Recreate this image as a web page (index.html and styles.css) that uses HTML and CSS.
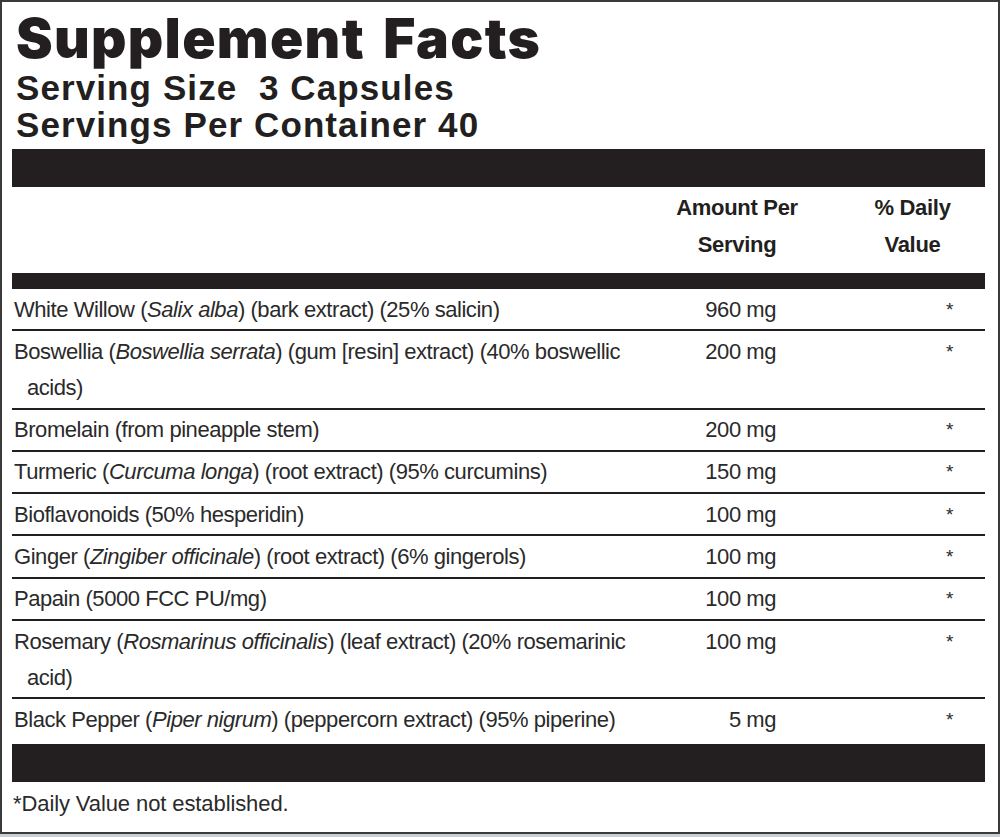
FILE: index.html
```html
<!DOCTYPE html>
<html lang="en">
<head>
<meta charset="utf-8">
<title>Supplement Facts</title>
<link rel="stylesheet" href="styles.css">
</head>
<body>
<div class="label">
  <h1 class="title">Supplement Facts</h1>
  <p class="serving">Serving Size&nbsp; 3 Capsules</p>
  <p class="serving">Servings Per Container 40</p>
  <div class="bar bar-thick"></div>
  <div class="grid head">
    <div></div>
    <div class="h-amt">Amount Per<br>Serving</div>
    <div class="h-dv">% Daily<br>Value</div>
  </div>
  <div class="bar bar-mid"></div>
  <div class="rows">
    <div class="grid row"><div class="name">White Willow (<i>Salix alba</i>) (bark extract) (25% salicin)</div><div class="amt">960 mg</div><div class="dv">*</div></div>
    <div class="grid row"><div class="name">Boswellia (<i>Boswellia serrata</i>) (gum [resin] extract) (40% boswellic acids)</div><div class="amt">200 mg</div><div class="dv">*</div></div>
    <div class="grid row"><div class="name">Bromelain (from pineapple stem)</div><div class="amt">200 mg</div><div class="dv">*</div></div>
    <div class="grid row"><div class="name">Turmeric (<i>Curcuma longa</i>) (root extract) (95% curcumins)</div><div class="amt">150 mg</div><div class="dv">*</div></div>
    <div class="grid row"><div class="name">Bioflavonoids (50% hesperidin)</div><div class="amt">100 mg</div><div class="dv">*</div></div>
    <div class="grid row"><div class="name">Ginger (<i>Zingiber officinale</i>) (root extract) (6% gingerols)</div><div class="amt">100 mg</div><div class="dv">*</div></div>
    <div class="grid row"><div class="name">Papain (5000 FCC PU/mg)</div><div class="amt">100 mg</div><div class="dv">*</div></div>
    <div class="grid row"><div class="name">Rosemary (<i>Rosmarinus officinalis</i>) (leaf extract) (20% rosemarinic acid)</div><div class="amt">100 mg</div><div class="dv">*</div></div>
    <div class="grid row last"><div class="name">Black Pepper (<i>Piper nigrum</i>) (peppercorn extract) (95% piperine)</div><div class="amt">5 mg</div><div class="dv">*</div></div>
  </div>
  <div class="bar bar-thick bar-bottom"></div>
  <p class="foot">*Daily Value not established.</p>
</div>
</body>
</html>
```
FILE: styles.css
```css
html {
  background: #c9cfd6;
}
body {
  margin: 0;
  background: #c9cfd6;
}
.label {
  box-sizing: border-box;
  width: 1000px;
  height: 834px;
  border: 2px solid #3a3a3a;
  background: #ffffff;
  padding: 10px 13px 0 10px;
  color: #231f20;
}
.title {
  margin: 0 0 0 4px;
  font-family: Inter, "Liberation Sans", sans-serif;
  font-weight: 900;
  font-size: 55px;
  line-height: 52px;
  letter-spacing: 1.3px;
  word-spacing: 6px;
}
.serving {
  margin: 0 0 0 4px;
  font-family: "Liberation Sans", Arial, sans-serif;
  font-weight: bold;
  font-size: 35px;
  line-height: 37px;
  letter-spacing: 1.1px;
}
.title + .serving {
  margin-top: 5px;
}
.bar {
  background: #231f20;
}
.bar-thick {
  height: 38px;
  margin-top: 6px;
}
.bar-bottom {
  margin-top: 0;
}
.bar-mid {
  height: 16px;
}
.grid {
  display: grid;
  grid-template-columns: 1fr 122px 187px;
}
.head {
  font-family: "Liberation Sans", Arial, sans-serif;
  font-weight: bold;
  font-size: 22px;
  line-height: 37px;
  letter-spacing: -0.3px;
  padding: 2px 0 10px;
  text-align: center;
  white-space: nowrap;
}
.h-dv {
  padding-left: 42px;
}
.rows {
  font-family: "Liberation Sans", Arial, sans-serif;
  font-size: 22px;
  letter-spacing: -0.45px;
  line-height: 36px;
  color: #2a2a2a;
}
.row {
  padding: 2.5px 0 1.8px;
  border-bottom: 2px solid #231f20;
}
.row.last {
  border-bottom: none;
  padding-bottom: 6px;
}
.name {
  padding-left: 15px;
  text-indent: -13px;
  padding-right: 20px;
}
.amt {
  text-align: right;
  padding-right: 22px;
}
.dv {
  text-align: right;
  padding-right: 32px;
  font-size: 19px;
}
.foot {
  margin: 0;
  font-family: "Liberation Sans", Arial, sans-serif;
  font-size: 22px;
  letter-spacing: -0.1px;
  line-height: 37px;
  padding-top: 3px;
  padding-left: 1px;
  color: #2a2a2a;
}
```
